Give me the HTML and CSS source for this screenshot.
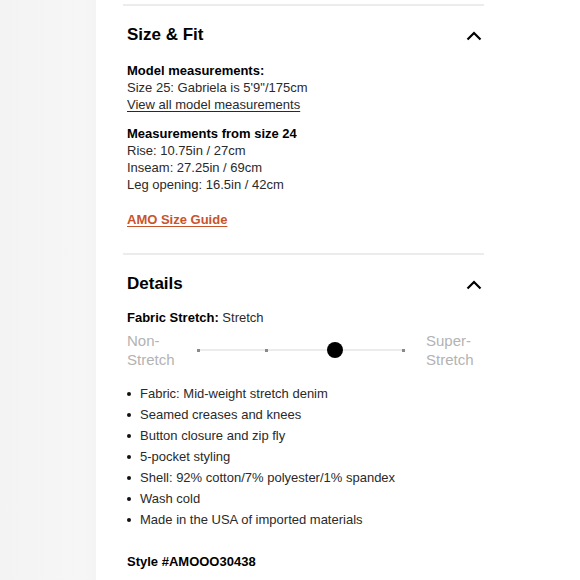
FILE: index.html
```html
<!DOCTYPE html>
<html>
<head>
<meta charset="utf-8">
<link rel="stylesheet" href="styles.css">
</head>
<body>
<div class="page">
  <div class="side"></div>
  <main class="panel">
    <div class="column">
      <section class="section">
        <div class="section-head">
          <h2 class="title">Size &amp; Fit</h2>
          <svg class="chev" width="16" height="10" viewBox="0 0 16 10"><path d="M1.5 8.5 L8 2 L14.5 8.5" fill="none" stroke="#000" stroke-width="2.2"/></svg>
        </div>
        <div class="block">
          <div class="bold">Model measurements:</div>
          <div>Size 25: Gabriela is 5'9"/175cm</div>
          <div><a class="ulink">View all model measurements</a></div>
        </div>
        <div class="block gap">
          <div class="bold">Measurements from size 24</div>
          <div>Rise: 10.75in / 27cm</div>
          <div>Inseam: 27.25in / 69cm</div>
          <div>Leg opening: 16.5in / 42cm</div>
        </div>
        <div class="guide"><a class="orange">AMO Size Guide</a></div>
      </section>
      <section class="section">
        <div class="section-head">
          <h2 class="title">Details</h2>
          <svg class="chev" width="16" height="10" viewBox="0 0 16 10"><path d="M1.5 8.5 L8 2 L14.5 8.5" fill="none" stroke="#000" stroke-width="2.2"/></svg>
        </div>
        <div class="stretch-label"><span class="bold">Fabric Stretch:</span> Stretch</div>
        <div class="stretch">
          <div class="end">Non-<br>Stretch</div>
          <div class="track">
            <span class="stop"><span class="tick"></span></span>
            <span class="stop"><span class="tick"></span></span>
            <span class="stop"><span class="knob"></span></span>
            <span class="stop"><span class="tick"></span></span>
          </div>
          <div class="end right">Super-<br>Stretch</div>
        </div>
        <ul class="bullets">
          <li>Fabric: Mid-weight stretch denim</li>
          <li>Seamed creases and knees</li>
          <li>Button closure and zip fly</li>
          <li>5-pocket styling</li>
          <li>Shell: 92% cotton/7% polyester/1% spandex</li>
          <li>Wash cold</li>
          <li>Made in the USA of imported materials</li>
        </ul>
        <div class="style bold">Style #AMOOO30438</div>
      </section>
    </div>
  </main>
</div>
</body>
</html>
```
FILE: styles.css
```css
html, body {
  margin: 0;
  padding: 0;
  background: #fff;
}
body {
  font-family: "Liberation Sans", Arial, sans-serif;
  color: #2a2a2a;
  font-size: 13px;
  line-height: 17px;
}
.page {
  display: flex;
  width: 580px;
  height: 580px;
  overflow: hidden;
}
.side {
  width: 96px;
  flex: none;
  background: linear-gradient(to right, #f3f3f3, #f6f6f6 85%, #f4f4f4);
}
.panel {
  flex: 1;
  background: #fff;
  padding-left: 27px;
}
.column {
  width: 361px;
  padding-top: 4px;
}
.section {
  border-top: 2px solid #ececec;
  padding: 0 4px;
}
.section-head {
  display: flex;
  justify-content: space-between;
  align-items: center;
  height: 22px;
  margin-top: 17px;
}
.title {
  margin: 0;
  font-size: 17px;
  font-weight: bold;
  color: #000;
}
.chev {
  margin-right: -2px;
  margin-top: 4px;
}
.block {
  margin-top: 17px;
}
.block.gap {
  margin-top: 12px;
}
.bold {
  font-weight: bold;
  color: #000;
}
.ulink {
  text-decoration: underline;
  text-underline-offset: 2px;
}
.guide {
  margin-top: 18px;
  margin-bottom: 25px;
}
.orange {
  color: #c9532c;
  font-weight: bold;
  text-decoration: underline;
  text-underline-offset: 2px;
}
.stretch-label {
  margin-top: 15px;
}
.stretch {
  display: flex;
  align-items: center;
  margin-top: 5px;
}
.end {
  flex: none;
  width: 63px;
  font-size: 15px;
  line-height: 19px;
  color: #b3b3b3;
}
.end.right {
  margin-left: 14px;
  width: 60px;
}
.track {
  flex: none;
  position: relative;
  width: 222px;
  height: 16px;
  display: flex;
  justify-content: space-between;
  align-items: center;
}
.track::before {
  content: "";
  position: absolute;
  left: 8px;
  right: 8px;
  top: 7px;
  height: 2px;
  background: #ececec;
}
.stop {
  position: relative;
  width: 16px;
  height: 16px;
  display: flex;
  align-items: center;
  justify-content: center;
}
.tick {
  width: 3px;
  height: 3px;
  background: #8a8a8a;
}
.knob {
  width: 16px;
  height: 16px;
  border-radius: 50%;
  background: #000;
}
.bullets {
  list-style: none;
  margin: 14px 0 0;
  padding-left: 13px;
  line-height: 21px;
}
.bullets li {
  position: relative;
}
.bullets li::before {
  content: "";
  position: absolute;
  left: -13px;
  top: 9px;
  width: 4px;
  height: 4px;
  border-radius: 50%;
  background: #111;
}
.style {
  margin-top: 23px;
}
```
